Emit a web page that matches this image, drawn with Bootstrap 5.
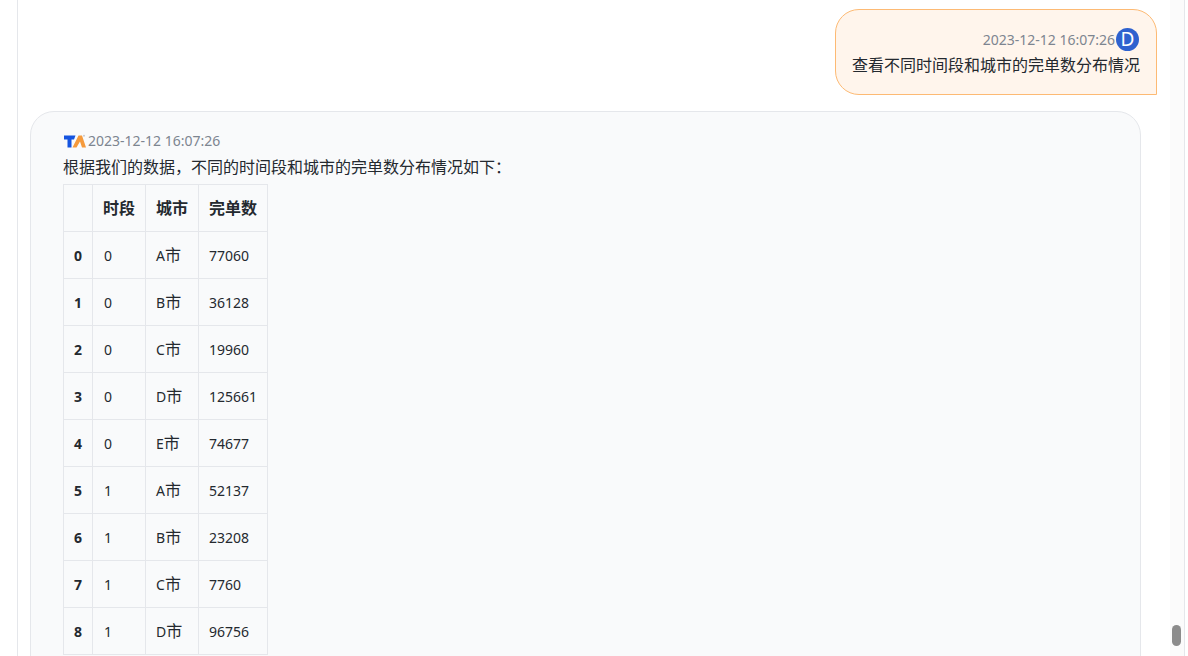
<!DOCTYPE html>
<html lang="zh-CN">
<head>
<meta charset="utf-8">
<title>Chat</title>
<link rel="stylesheet" href="https://cdn.jsdelivr.net/npm/bootstrap@5.3.0/dist/css/bootstrap.min.css">
<style>
html,body{height:656px;overflow:hidden;background:#fff;}
body{font-family:"Noto Sans","Noto Sans CJK SC",sans-serif;font-size:16px;line-height:22px;color:#24292f;}
.shell{height:656px;margin-left:17px;width:1168px;border-left:1px solid #e5e7eb;border-right:1px solid #e5e7eb;overflow:hidden;}
.chat-col{width:1152px;height:656px;padding-left:12px;overflow:hidden;flex:none;}
.track{flex:1;background:#fbfbfb;padding:625px 3px 0 2px;}
.thumb{height:21px;width:9px;background:#8c8c8c;border-radius:5px;}
.bubble-user{width:322px;height:86px;margin:9px 0 16px 805px;background:#fff5ec;border:1px solid #fdba74;border-radius:24px 24px 0 24px;padding:18px 16px 0 16px;text-align:right;}
.bubble-bot{width:1111px;height:600px;background:#f9fafb;border:1px solid #e5e7eb;border-radius:24px;padding:18px 32px 0 32px;}
.stamp{color:#7d8590;font-size:14px;line-height:22px;}
.stamp-user{margin-top:2px;}
.meta-line{height:22px;}
.avatar-d{width:23px;height:23px;border-radius:50%;background:#2f62cf;color:#fff;font-family:"Noto Sans",sans-serif;font-size:19px;line-height:23px;text-align:center;flex:none;margin:0 1px 0 1px;}
.logo-ta{width:23px;height:15px;flex:none;display:block;margin-right:2px;}
.msg{line-height:22px;white-space:nowrap;}
.msg-user{margin-top:4px;}
.msg-bot{margin-top:4px;}
.data-tbl{border-collapse:collapse;font-size:14px;margin-top:6px;color:#24292f;}
.data-tbl th,.data-tbl td{border:1px solid #e5e7eb;height:47px;padding:1px 10px 0 10px;vertical-align:middle;white-space:nowrap;}
.data-tbl th{font-weight:700;}
.data-tbl thead th{font-size:16px;padding-top:0;}
.data-tbl td.cell-num{padding-left:11px;}
.zh-big{font-size:16px;line-height:1;}
.data-tbl th.c0{width:29px;text-align:center;}
.c1{width:53px;}
.c2{width:53px;}
.c3{width:69px;}
</style>
</head>
<body>
<div class="shell d-flex">
  <div class="chat-col">
    <div class="bubble-user">
      <div class="meta-line d-flex justify-content-end align-items-center">
        <span class="stamp stamp-user">2023-12-12 16:07:26</span>
        <span class="avatar-d">D</span>
      </div>
      <div class="msg msg-user">查看不同时间段和城市的完单数分布情况</div>
    </div>
    <div class="bubble-bot">
      <div class="meta-line d-flex align-items-center">
        <svg class="logo-ta" viewBox="0 0 23 15" aria-hidden="true">
          <path d="M1 1.500h11.500l-1.500 4H8.500V13.500H4.500V5.500H1z" fill="#1554e0"/>
          <path d="M15.500 1.500h3.500l4 12h-4l-2-6-3.500 6H9.500z" fill="#f59a3c"/>
          <circle cx="21" cy="1.800" r="1" fill="#c4c9d2"/>
        </svg>
        <span class="stamp">2023-12-12 16:07:26</span>
      </div>
      <div class="msg msg-bot">根据我们的数据，不同的时间段和城市的完单数分布情况如下：</div>
      <table class="data-tbl">
        <thead>
          <tr><th class="c0"></th><th class="c1">时段</th><th class="c2">城市</th><th class="c3">完单数</th></tr>
        </thead>
        <tbody>
          <tr><th class="c0">0</th><td class="cell-num">0</td><td>A<span class="zh-big">市</span></td><td>77060</td></tr>
          <tr><th class="c0">1</th><td class="cell-num">0</td><td>B<span class="zh-big">市</span></td><td>36128</td></tr>
          <tr><th class="c0">2</th><td class="cell-num">0</td><td>C<span class="zh-big">市</span></td><td>19960</td></tr>
          <tr><th class="c0">3</th><td class="cell-num">0</td><td>D<span class="zh-big">市</span></td><td>125661</td></tr>
          <tr><th class="c0">4</th><td class="cell-num">0</td><td>E<span class="zh-big">市</span></td><td>74677</td></tr>
          <tr><th class="c0">5</th><td class="cell-num">1</td><td>A<span class="zh-big">市</span></td><td>52137</td></tr>
          <tr><th class="c0">6</th><td class="cell-num">1</td><td>B<span class="zh-big">市</span></td><td>23208</td></tr>
          <tr><th class="c0">7</th><td class="cell-num">1</td><td>C<span class="zh-big">市</span></td><td>7760</td></tr>
          <tr><th class="c0">8</th><td class="cell-num">1</td><td>D<span class="zh-big">市</span></td><td>96756</td></tr>
        </tbody>
      </table>
    </div>
  </div>
  <div class="track"><div class="thumb"></div></div>
</div>
</body>
</html>
